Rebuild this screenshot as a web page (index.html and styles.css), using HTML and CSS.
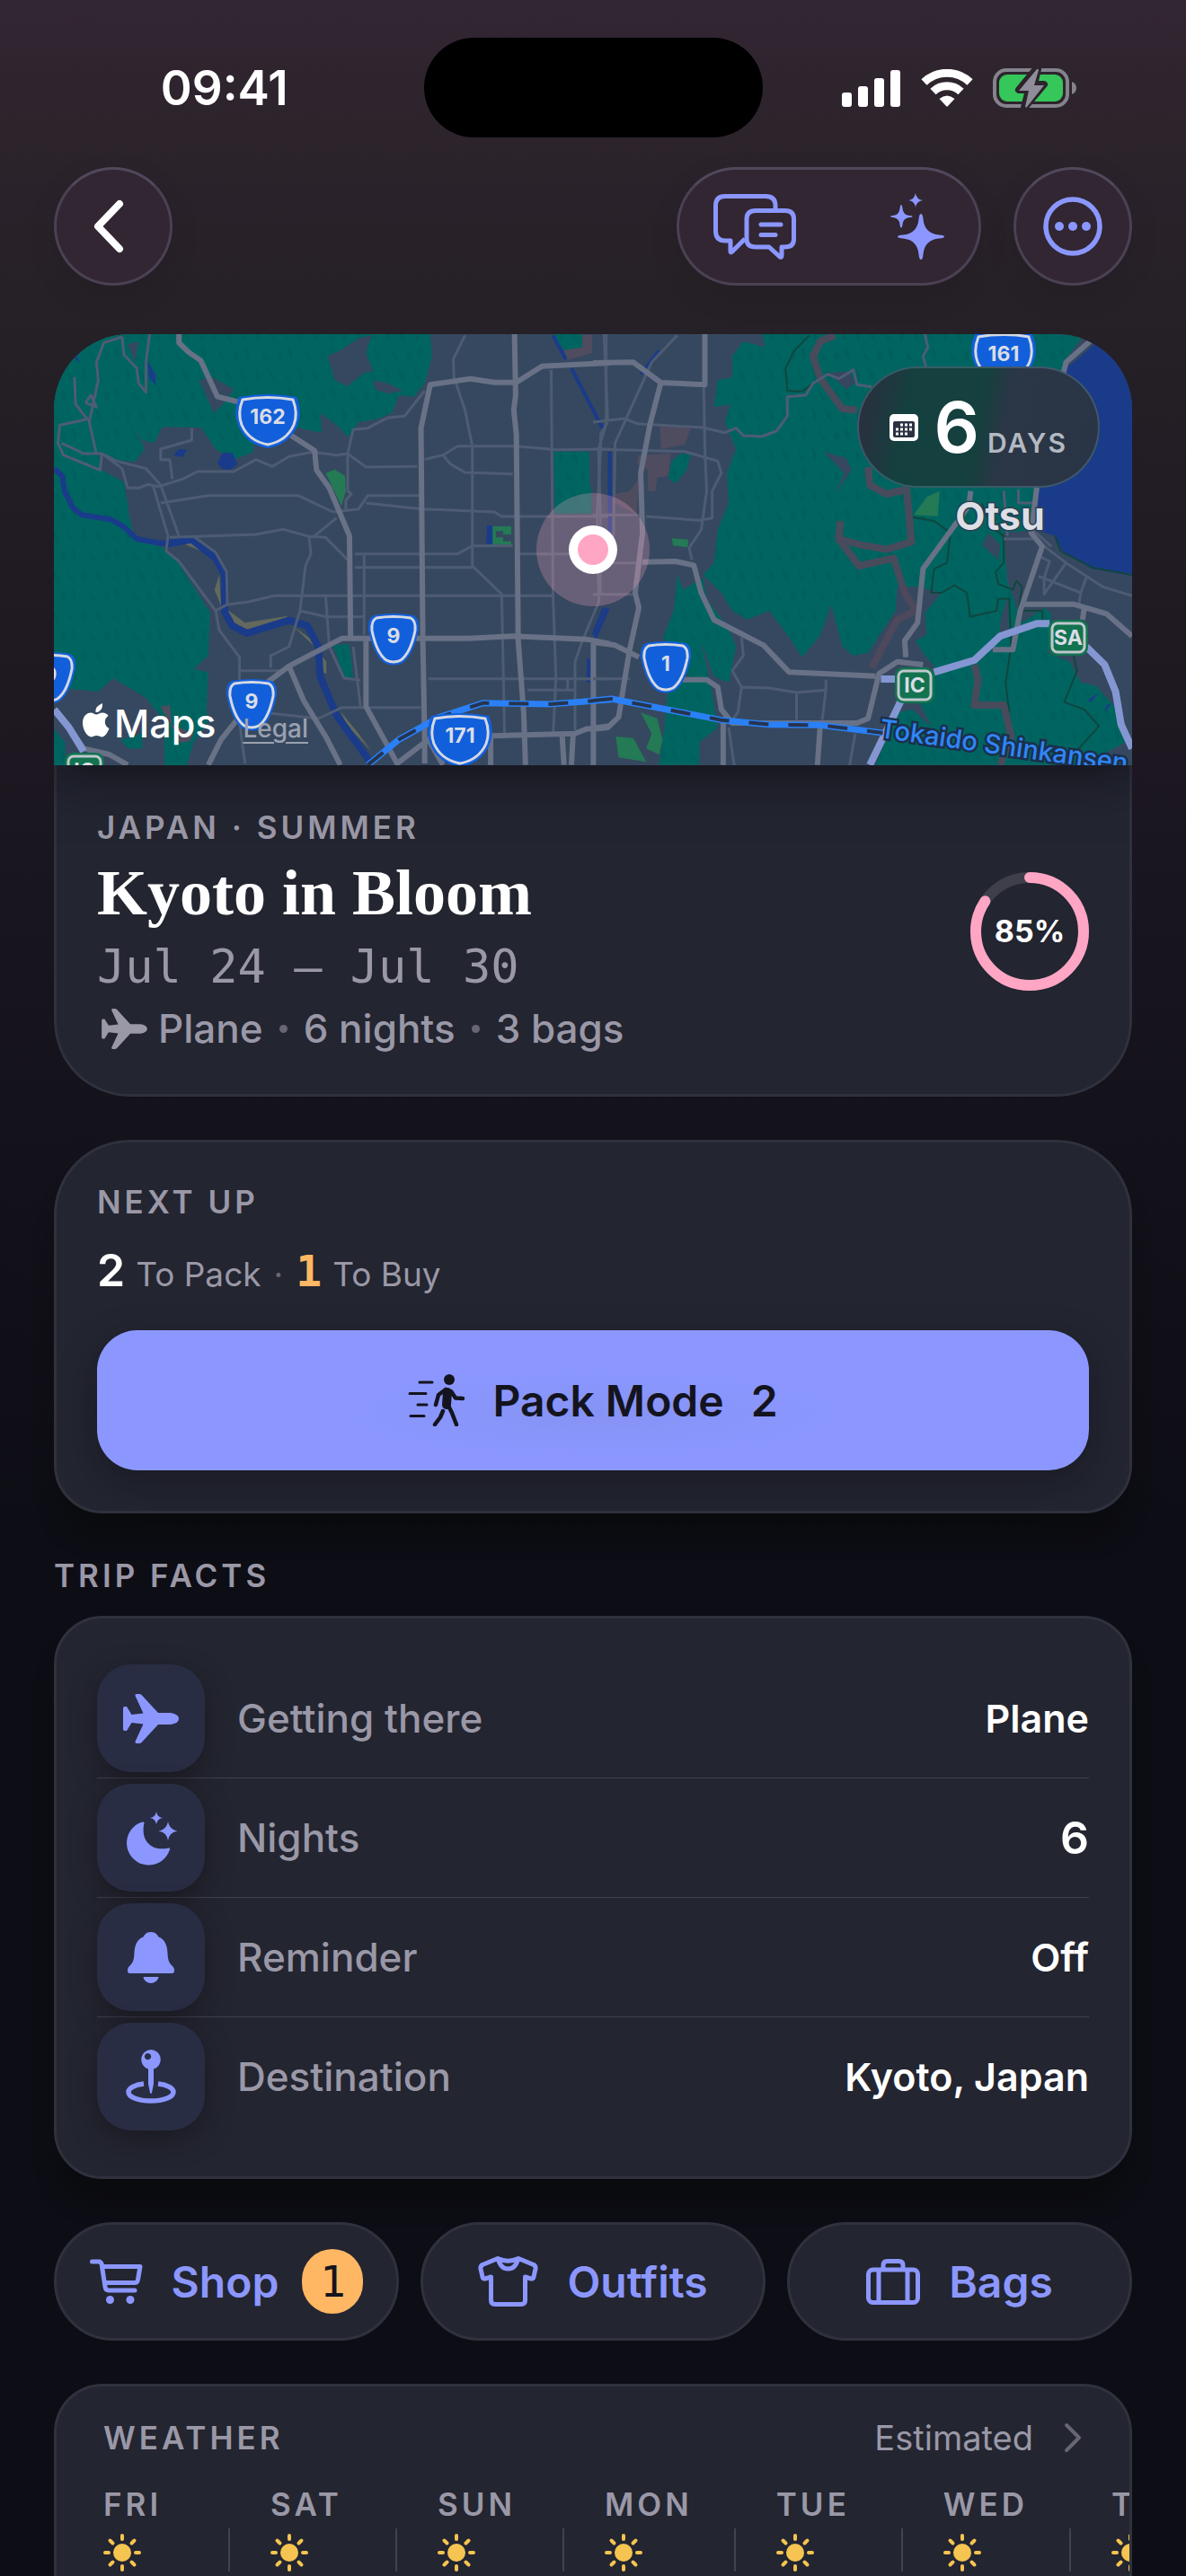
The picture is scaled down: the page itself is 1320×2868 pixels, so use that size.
FILE: index.html
```html
<!DOCTYPE html>
<html lang="en">
<head>
<meta charset="utf-8">
<meta name="viewport" content="width=device-width, initial-scale=1">
<title>Kyoto in Bloom</title>
<link rel="stylesheet" href="styles.css">
</head>
<body>
<svg class="defs" aria-hidden="true">
  <symbol id="plane" viewBox="0 0 62 55"><path d="M0 16Q0 14 2 14H4L9.500 23 22.500 21.500 13.500 2Q13 0 15 0H18Q19.500 0 20.500 1L39 21H53Q62 22.500 62 27.500Q62 32.500 53 34H39L20.500 54Q19.500 55 18 55H15Q13 55 13.500 53L22.500 33.500 9.500 32 4 41H2Q0 41 0 39Z"/></symbol>
  <symbol id="sun" viewBox="0 0 42 42"><circle cx="21" cy="21" r="10"/><path class="rays" d="M21 2V6M21 36V40M2 21H6M36 21H40M7.500 7.500L10.500 10.500M31.500 31.500L34.500 34.500M34.500 7.500L31.500 10.500M10.500 31.500L7.500 34.500"/></symbol>
</svg>
<div class="screen">
  <header class="status">
    <span class="time">09:41</span>
    <span class="island"></span>
    <span class="indicators">
      <svg width="66" height="42" viewBox="0 0 66 42" fill="#fff"><rect x="0" y="26" width="11" height="16" rx="3"/><rect x="18" y="19" width="11" height="23" rx="3"/><rect x="36" y="10" width="11" height="32" rx="3"/><rect x="54" y="1" width="11" height="41" rx="3"/></svg>
      <svg width="58" height="42" viewBox="0 0 58 42"><g fill="none" stroke="#fff" stroke-width="9"><path d="M3.500 14.500A37 37 0 0 1 54.500 14.500"/><path d="M13.500 25A22.500 22.500 0 0 1 44.500 25"/></g><path fill="#fff" d="M20.500 33Q29 26 37.500 33L30 41Q29 42 28 41Z"/></svg>
      <svg width="94" height="46" viewBox="0 0 94 46"><rect x="2" y="3" width="81" height="40" rx="13" fill="none" stroke="#85838e" stroke-width="4"/><rect x="7" y="8" width="71" height="30" rx="9" fill="#35c759"/><path d="M88 16Q93 18 93 23T88 30Z" fill="#85838e"/><path d="M48 2L29 25H40L35 45 57 19H46L50 2Z" fill="#8e8d98" stroke="#2d232c" stroke-width="8" stroke-linejoin="round"/><path d="M49 2L29 26H40L36 44Q37 45 38 44L57 20H46L51 3Q50 1 49 2Z" fill="#8e8d98"/></svg>
    </span>
  </header>

  <nav class="toolbar">
    <button class="glass round" aria-label="Back"><svg width="36" height="60" viewBox="0 0 36 60"><path d="M30 5L6 30 30 55" fill="none" stroke="#fff" stroke-width="8" stroke-linecap="round" stroke-linejoin="round"/></svg></button>
    <div class="tools">
      <div class="glass group">
        <button aria-label="Chat"><svg width="92" height="73" viewBox="0 0 92 73" fill="none" stroke="#8b97ff" stroke-width="5" stroke-linejoin="round" stroke-linecap="round"><path stroke-linecap="butt" d="M69 18V13Q69 2.500 58 2.500H13Q2.500 2.500 2.500 13V41Q2.500 52 13 52H19V63.500Q19 66 21 64L35 50"/><path d="M47 18.500H80Q89.500 18.500 89.500 28V50Q89.500 59 80 59H76V69Q76 71 74 70L62 59H47Q37 59 37 50V28Q37 18.500 47 18.500Z"/><path d="M53 34H75M53 45.500H69"/></svg></button>
        <button aria-label="Suggestions"><svg width="60" height="74" viewBox="0 0 60 74" fill="#8b97ff"><path d="M34 23Q36 23 36.500 29Q38 45 54 46.500Q60 47 60 48.500T54 50.500Q38 52 36.500 68Q36 74 34 74T31.500 68Q30 52 14 50.500Q8 50 8 48.500T14 46.500Q30 45 31.500 29Q32 23 34 23Z"/><path d="M12 13Q13 13 13.500 17Q14 24 21 25Q24.500 25 24.500 26T21 27Q14 28 13.500 35Q13 38.500 12 38.500T10.500 35Q10 28 3 27Q0 27 0 26T3 25Q10 24 10.500 17Q11 13 12 13Z"/><path d="M28 0Q29 7 36 8Q29 9 28 16Q27 9 20 8Q27 7 28 0Z"/></svg></button>
      </div>
      <button class="glass round" aria-label="More"><svg width="66" height="66" viewBox="0 0 66 66" fill="#8b97ff"><circle cx="33" cy="33" r="30" fill="none" stroke="#8b97ff" stroke-width="5.500"/><circle cx="18" cy="33" r="5"/><circle cx="33" cy="33" r="5"/><circle cx="48" cy="33" r="5"/></svg></button>
    </div>
  </nav>

  <main>
    <section class="hero">
      <div class="map">
        <svg class="map-art" viewBox="0 0 1200 480" preserveAspectRatio="xMidYMid slice" role="img" aria-label="Map of Kyoto">
          <defs>
            <pattern id="hills" width="118" height="134" patternUnits="userSpaceOnUse">
              <rect width="118" height="134" fill="#006561"/>
              <path d="M6 4L22 40 14 66 8 30ZM40 10L58 34 66 70 48 48ZM84 2L96 40 112 58 92 52ZM24 70L34 100 52 128 30 118ZM70 84L82 104 78 130 66 108ZM98 74L112 104 106 126 96 98Z" fill="#00605d"/>
            </pattern>
            <g id="wide"><path d="M-32-25Q0-31 32-25Q39-8 33 7Q24 28 0 32Q-24 28-33 7Q-39-8-32-25Z" fill="#125fdc"/><path d="M-28-22Q0-27 28-22Q34-7 29 6Q21 24 0 28Q-21 24-29 6Q-34-7-28-22Z" fill="none" stroke="#d5d9e2" stroke-width="3"/></g>
            <g id="slim"><path d="M-22-25Q0-29 22-25Q29-22 28-9Q22 20 10 28Q0 33-10 28Q-22 20-28-9Q-29-22-22-25Z" fill="#125fdc"/><path d="M-19-22Q0-25 19-22Q25-19 24-8Q19 17 8 25Q0 29-8 25Q-19 17-24-8Q-25-19-19-22Z" fill="none" stroke="#d5d9e2" stroke-width="3"/></g>
            <g id="exit"><rect x="-22" y="-20" width="44" height="40" rx="9" fill="#127350"/><rect x="-18" y="-16" width="36" height="32" rx="6" fill="none" stroke="#c0c8cc" stroke-width="3"/></g>
          </defs>
          <rect width="1200" height="480" fill="#36485f"/>

          <!-- west half -->
          <g class="geo" transform="translate(-20 -12) scale(.40816 .33333)">
            <g class="forest">
              <path d="M40 30H1075L1080 110 1060 200 1030 245 990 240 970 300 930 320 880 330 852 380 820 340 775 300 780 365 720 350 600 330 592 430 540 455 490 420 450 348 345 346 322 400 290 390 270 350 297 420 270 462 200 455 170 430 180 490 240 530 250 600 255 650 270 720 350 750 390 800 430 880 475 965 470 1110 430 1155 470 1165 465 1290 470 1330 430 1400 410 1480H350L350 1330 300 1250 210 1185 170 1230 40 1215Z"/>
              <path d="M1412 428H1510V530L1515 560 1515 635H1415Z"/>
              <path d="M810 1075L855 1070 865 1185 840 1180Z"/><path d="M40 1340L80 1400 80 1480H40Z"/><path d="M230 1390L290 1370 290 1420 250 1420Z"/>
              <path d="M1410 36H1490V80L1440 90Z"/>
            </g>
            <path class="land" d="M795 110L830 90 880 50 915 40 900 100 920 160 895 165 850 210 815 190Z"/>
            <path class="land" d="M445 190L480 180 540 220 510 270 485 300Z"/><path class="land" d="M920 190L960 200 1000 225 960 235 925 220Z"/><path class="land" d="M250 70L280 60 270 130Z"/>
            <path class="grass" d="M790 500L815 488 843 510 845 560 833 610Z"/><path class="grass" d="M1240 678H1296V740H1236Z"/><path class="land" d="M1254 694H1274V706H1296V728H1274V715H1254Z"/>
            <path class="brick" d="M340 1280L365 1275 370 1340 430 1370 420 1395 395 1400Z"/><path class="brick" d="M1440 90L1490 80V38H1517V98L1450 122Z"/>
            <g class="sand">
              <path d="M400 735L440 727 475 768 440 755Z"/><path d="M500 840L505 945 487 890Z"/><path d="M515 950L570 1000 685 978 685 990 570 1025 520 985Z"/><path d="M700 1010L760 1080 745 1050Z"/><path d="M775 1105L792 1130 792 1170 780 1165Z"/><path d="M830 1295L880 1370 915 1430 850 1345Z"/>
            </g>
            <path class="lake" d="M375 440L390 420 412 422 400 448ZM495 465L510 432H535L550 470 530 490 505 485ZM305 125L325 170 328 210 308 180ZM105 115L130 85 112 110 120 135ZM1230 675H1245V738H1228Z"/>
            <g class="river">
              <path d="M50 485L72 510 78 560 100 615 125 640 205 655 240 680 275 720 340 735 420 725" stroke-width="6"/>
              <path d="M350 738L425 722 490 785 515 840 515 965 535 1010 575 1035 690 992 740 1010 770 1080 775 1180 820 1310 915 1470" stroke-width="8"/>
              <path d="M1410 40L1445 120" stroke-width="4"/><path d="M1460 150L1545 350M1565 430V700M1560 950L1525 1050M1507 1120V1200" stroke-width="4"/>
            </g>
            <g class="minor">
              <path d="M235 45L185 65 165 130 170 190 145 330 165 435M235 45L240 105 275 150 280 200 300 230 300 130 310 36M105 180L108 270 140 320 65 340 60 400 75 440 125 465 175 490 180 435 130 435 70 400M135 265L165 280 150 240 135 265"/>
              <path d="M180 435L220 460 300 485 340 540 390 710M180 435L235 485 250 550 280 550 305 538 335 545 400 520 440 495 540 495 600 455 645 478 690 445 755 430 820 440 850 435 865 355 905 350 960 315 1005 310 1060 225"/>
              <path d="M320 545L360 710 355 760 390 795 490 960 500 1025 555 1115 555 1330 570 1470M425 350V390L340 420V455H365L372 520M340 600L470 575H715L810 630"/>
              <path d="M365 715L600 705 675 688 745 712 790 715 850 790M430 712L490 765 520 830 522 940M820 650L760 710 745 715 750 770 735 810 720 960 690 1080 640 1110 640 1150M490 960L520 940 580 930 650 910H1410M720 960L790 980H895"/>
              <path d="M850 435L900 480 1040 478M850 440V560L860 570 845 590V620M810 630L880 620 905 575H1045M900 600L1050 620 1250 630 1270 645H1560M1060 455L1110 440 1150 410H1310L1420 422 1565 420M1110 440L1130 470 1170 498 1300 503"/>
              <path d="M1170 40L1138 120 1140 180 1170 290 1190 410V810L1270 905 1278 1380M1405 155L1410 910 1418 1180 1410 1380M870 770H1150L1190 743H1300M870 815L1190 815M895 770V1040M1320 770H1560M1540 420L1530 640 1535 930 1490 1060 1470 1130V1360M1555 36V340L1540 370V420"/>
              <path d="M790 910L800 1080 840 1185 885 1192M865 1080L885 1280M555 1160H670M620 1300L770 1320 835 1283H1050M1070 1187H1565M1340 1225H1470M1450 1190V1225"/>
            </g>
            <g class="major">
              <path d="M390 36V65L415 95 450 125 495 245 560 265"/><path d="M690 370L760 425 765 490 800 550 855 710 858 1052"/>
              <path d="M1060 1470V1390L1055 1060 1050 350 1075 205 1185 185 1250 197H1310L1380 143 1565 132M1305 36L1308 240 1303 290 1310 370 1315 1060 1330 1300 1335 1475"/>
              <path d="M470 1475L505 1390 630 1200 690 1145 835 1052H1180L1300 1045 1500 1055 1565 1070M690 1145L730 1260 790 1380 830 1475M900 1055V1280L985 1470 1070 1390 1110 1475M1240 1475V1378L1470 1370 1500 1355 1565 1345M1520 1060V1475M1435 1380L1440 1475M1465 1370L1460 1475"/>
              <path d="M50 1290L90 1350 130 1420 200 1440 250 1475"/>
            </g>
            <path class="express" d="M50 1290L90 1350 130 1430"/>
            <path class="rail" d="M905 1475L990 1390 1100 1315 1220 1268 1400 1272 1570 1256"/><path class="ties" d="M905 1475L990 1390 1100 1315 1220 1268 1400 1272 1570 1256"/>
          </g>

          <!-- east half -->
          <g class="geo" transform="translate(600 -12) scale(.40816 .33333)">
            <g class="forest">
              <path d="M380 110L410 60 470 80 460 36H1340L1290 120 1210 560 1205 690 1120 700 1130 860 1170 1000 1230 950 1250 970 1240 1100 1300 1130 1330 1200 1370 1210 1430 1290 1450 1400 1390 1440 1340 1475H770L830 1300 870 1290 920 1340 880 1240 940 1160 900 1100 880 1060 910 1040 905 960 950 900 890 880 830 880 825 960 750 1100 710 1110 680 1080 650 940 620 1040 570 1115 530 1040 480 960 420 990 380 960 350 900 300 840 330 800 340 690 370 600 365 500 390 420 360 330 375 270 330 280 340 190 380 180Z"/>
              <path d="M230 840L245 890 300 850 310 920 370 1020 390 1080 370 1200 330 1180 300 1080 260 980 240 900 290 1040 320 1200 340 1350 290 1400 290 1475H180L195 1350 205 1210 260 1180 240 1120 190 1050 220 960Z"/>
              <path d="M215 460L240 435 267 437 255 490 225 535 205 515Z"/><path d="M1125 550H1153V610H1125Z"/>
            </g>
            <path class="land" d="M630 430L690 450 705 490 660 570 685 500ZM640 165L700 160 715 200 690 220ZM1060 740L1080 700 1110 740 1105 790ZM880 1290L930 1350 905 1330ZM1110 1000L1130 910 1135 1050 1110 1040ZM870 900L950 900 890 990 850 1050 840 960Z"/>
            <path class="grass" d="M215 718L260 722 258 748 218 742ZM875 640L910 580 945 560 940 645ZM130 1300L175 1320 190 1390 180 1440 145 1420 160 1370ZM62 1380L110 1385 145 1465 70 1450Z"/>
            <path class="brick" d="M183 343L267 350 250 405 185 420ZM125 440L212 435 205 510 175 515 170 560H150V490L120 465ZM60 570L100 560 125 520 120 640 60 600Z"/>
            <path class="lake" d="M1370 66L1330 110 1290 150 1215 560 1210 690 1260 710 1280 760 1360 820 1480 845V36ZM1350 1260L1378 1232 1360 1265ZM1395 1300L1413 1270 1400 1275Z"/>
            <g class="river"><path d="M45 430V690M30 950L0 1040M0 285L25 350M180 90L130 170" stroke-width="3"/></g>
            <path class="border" d="M590 40L550 90 525 150 530 225 570 228 600 200M860 645L930 660 975 700 965 800 930 820 922 900 950 900 985 875 1020 900 1028 980 1100 960 1105 920H1135L1140 1080 1125 1200 1135 1300M1060 600L1085 680 1120 710V800L1098 830 1105 870 1145 890 1155 860 1170 880 1160 960 1225 960V1000M1310 1110L1320 1160 1285 1265 1340 1290 1380 1345 1310 1440M1260 710L1275 760 1360 815 1470 840"/>
            <path class="trail" d="M660 40L620 60 600 110 620 185 680 285 720 290M750 480L755 540 800 570 855 555 862 640 868 730 800 755 730 740 670 720 675 660M670 720L725 810 820 785 850 900 880 960 830 990 790 1080 760 1150M1040 1140L1050 1190 1040 1275H1120L1140 1380 1110 1475"/>
            <g class="minor">
              <path d="M30 36L40 320 15 420 20 640V910M230 40L160 130 90 320 60 400 55 800M0 330L85 318 120 335 300 348 360 365 390 350 410 375 460 378 500 360 530 310V245L580 240 600 200 640 170 670 185 710 155 720 205 760 212M905 36L913 80 900 110 908 145M302 210L305 420 310 560 295 690 262 750 270 790"/>
              <path d="M0 420L250 428 340 460 350 500 325 560V650L290 658 145 645M0 640H130M0 800H140M0 905H110M405 1050L410 1110 380 1160 405 1215 480 1218 555 1233 635 1225V1190M555 1233V1325M635 1225L625 1325M405 1215L395 1300 370 1340M0 1187H100M700 1475L715 1370M370 1350L385 1475"/>
              <path d="M1215 730L1290 800 1390 880 1470 910M1290 800L1230 905V850L1245 795 1220 780M1215 845L1330 900 1345 850M1330 900L1325 940M1120 720H1200M1120 560L1130 710M1160 555V600H1200M1200 690L1250 745"/>
            </g>
            <g class="major">
              <path d="M305 36V205L185 198 110 130 0 132M185 198L155 340 130 500 135 700 115 900 125 950 100 1090 85 1200 70 1315 40 1350 0 1355M135 797L225 795 275 808 295 900 330 990 465 1075 535 1165 770 1178M0 1065L60 1075 125 1115M240 1190H310L340 1215 350 1290 380 1335 720 1335 750 1320 780 1170 830 1130 900 1140M355 1335V1475M620 1335L612 1475"/>
              <path d="M1030 560L1025 610 900 820 885 1000 850 1060 853 1115M1355 60L1290 130 1215 500 1195 700 1225 745 1165 960 1145 1090H1090M1175 938H1310L1400 970 1470 1045M1340 945L1335 990"/>
            </g>
            <path class="express" d="M755 1475L840 1260M785 1188H830M930 1165L1040 1125 1110 1045 1210 1003 1245 1003M1345 1080L1395 1140 1425 1230 1440 1340 1470 1420"/>
            <path class="rail" d="M0 1260L50 1254 350 1325 480 1340 620 1342 790 1368"/><path class="ties" d="M0 1260L50 1254 350 1325 480 1340 620 1342 790 1368"/>
          </g>

          <g class="shields">
            <use href="#wide" x="238" y="95"/><text x="238" y="100">162</text>
            <use href="#slim" x="378" y="338"/><text x="378" y="344">9</text>
            <use href="#slim" x="220" y="411"/><text x="220" y="417">9</text>
            <use href="#slim" x="-4" y="381"/><text x="-4" y="387">9</text>
            <use href="#wide" x="452" y="450"/><text x="452" y="455">171</text>
            <use href="#wide" x="1057" y="25"/><text x="1057" y="30">161</text>
            <use href="#slim" x="681" y="369"/><text x="681" y="375">1</text>
            <use href="#exit" x="958" y="391"/><text x="958" y="399">IC</text>
            <use href="#exit" x="1129" y="338"/><text x="1129" y="346">SA</text>
            <use href="#exit" x="34" y="486"/><text x="34" y="494">IC</text>
          </g>
          <text class="rail-name" transform="translate(918 449) rotate(8)">Tokaido Shinkansen</text>
          <text class="town" x="1053" y="218" text-anchor="middle">Otsu</text>
          <circle cx="600" cy="240" r="63" fill="#ffa8c5" fill-opacity=".25"/><circle cx="600" cy="240" r="27" fill="#fff"/><circle cx="600" cy="240" r="17" fill="#ffa6c4"/>
        </svg>
        <div class="countdown">
          <svg width="32" height="30" viewBox="0 0 32 30"><rect width="32" height="30" rx="5" fill="#fff"/><rect x="4" y="8" width="24" height="18" rx="2" fill="#2b3242"/><path d="M12 12H25M7 17H25M7 22H20" stroke="#fff" stroke-width="3" stroke-dasharray="3 2"/></svg>
          <strong>6</strong><span>DAYS</span>
        </div>
        <div class="credit">
          <span class="brand"><svg width="30" height="38" viewBox="0 0 30 38" fill="#fff"><path d="M22 0Q22.500 4.500 20 7.500T14.500 10Q14 6 16.500 3.500T22 0Z"/><path d="M15 12.500C17 12.500 19 10.500 22 10.500C25 10.500 27.500 12 28.500 14C23 17.500 24 25.500 29.500 28C28 32 25 37.500 21.500 37.500C19.500 37.500 18.500 36 15.500 36C12.500 36 11.500 37.500 9.500 37.500C5 37.500 0 29 0 22C0 14.500 4.500 10.500 9 10.500C11.500 10.500 13.500 12.500 15 12.500Z"/></svg>Maps</span>
          <a href="#legal">Legal</a>
        </div>
      </div>
      <div class="hero-body">
        <div class="hero-text">
          <p class="eyebrow">JAPAN · SUMMER</p>
          <h1>Kyoto in Bloom</h1>
          <p class="dates">Jul 24 — Jul 30</p>
          <p class="meta"><svg width="51" height="45"><use href="#plane"/></svg><span>Plane</span><i></i><span>6 nights</span><i></i><span>3 bags</span></p>
        </div>
        <div class="ring">
          <svg viewBox="0 0 132 132" fill="none" stroke-width="12"><circle cx="66" cy="66" r="60" stroke="#3e3f4a"/><circle cx="66" cy="66" r="60" stroke="#ffa6c4" stroke-linecap="round" pathLength="100" stroke-dasharray="84.500 100" transform="rotate(-90 66 66)"/></svg>
          <span>85%</span>
        </div>
      </div>
    </section>

    <section class="card next">
      <h2 class="eyebrow">NEXT UP</h2>
      <p class="counts"><span class="count"><b>2</b>To Pack</span><em>·</em><span class="count buy"><b>1</b>To Buy</span></p>
      <button class="pack">
        <svg width="64" height="58" viewBox="0 0 64 58" fill="none" stroke="#14141f" stroke-width="3" stroke-linecap="round" stroke-linejoin="round"><circle cx="46" cy="6" r="6" fill="#14141f" stroke="none"/><path d="M13 9H27M2 21.500H20M11 34H21M3 46.500H18"/><path stroke-width="10" d="M44 20L43 34"/><path stroke-width="4.500" d="M42 17L34 23 31 34M48 19L53 26.500 61 27M45 35L49 43 54 56M39 41L36 48 30 56"/></svg>
        <span>Pack Mode</span><span>2</span>
      </button>
    </section>

    <h2 class="eyebrow heading">TRIP FACTS</h2>
    <dl class="card facts">
      <div><dt><span class="tile"><svg width="62" height="55"><use href="#plane"/></svg></span>Getting there</dt><dd>Plane</dd></div>
      <div><dt><span class="tile"><svg width="60" height="62" viewBox="0 0 60 62"><path d="M20.500 13.500A24.500 24.500 0 1 0 51 44Q51.500 42 49.500 42.500C30 47 18 33 22.500 15Q23 13 20.500 13.500Z"/><path d="M36 2Q37 8 43 9Q37 10 36 16Q35 10 29 9Q35 8 36 2ZM49 13Q50.500 22 59.500 23.500Q50.500 25 49 34Q47.500 25 38.500 23.500Q47.500 22 49 13Z"/></svg></span>Nights</dt><dd class="number">6</dd></div>
      <div><dt><span class="tile"><svg width="52" height="57" viewBox="0 0 52 57"><path d="M26 0C31 0 33 3 34.500 5.500C41 8 44 14 44.500 23C44.800 33 47 35 50 38C52 40 52 42 52 43C52 45.500 50.500 46 49 46H3C1.500 46 0 45.500 0 43C0 42 0 40 2 38C5 35 7.200 33 7.500 23C8 14 11 8 17.500 5.500C19 3 21 0 26 0ZM17.500 50H34.500C34 54 30 57 26 57S18 54 17.500 50Z"/></svg></span>Reminder</dt><dd>Off</dd></div>
      <div><dt><span class="tile"><svg width="56" height="60" viewBox="0 0 56 60"><path fill-rule="evenodd" d="M28 0A11 11 0 0 1 31 21.500V38L29 48Q28 50 27 48L25 38V21.500A11 11 0 0 1 28 0ZM24.500 4A3.600 3.600 0 1 0 24.510 4Z"/><path d="M36 38C46 39 53 43 53 47C53 53 42 57 28 57S3 53 3 47C3 43 10 39 20 38" fill="none" stroke="#8b97ff" stroke-width="5.500"/></svg></span>Destination</dt><dd>Kyoto, Japan</dd></div>
    </dl>

    <div class="shortcuts">
      <button class="card"><svg width="59" height="50" viewBox="0 0 59 50" fill="none" stroke="#8b97ff" stroke-width="5" stroke-linecap="round" stroke-linejoin="round"><path d="M2.500 3H11L13 5 17 31Q17.500 35 21 35H50M14 8.500H56L53.500 23Q53 26.500 50 26.500H17"/><g fill="#8b97ff" stroke="none"><circle cx="22.500" cy="45.500" r="4.500"/><circle cx="45" cy="45.500" r="4.500"/></g></svg><span>Shop</span><span class="badge">1</span></button>
      <button class="card"><svg width="67" height="56" viewBox="0 0 67 56" fill="none" stroke="#8b97ff" stroke-width="5" stroke-linejoin="round"><path d="M22 2.500L5 9.500Q2.500 11 3 14L5 23Q5.500 25.500 8 25L14.500 23V49Q14.500 53.500 19 53.500H48Q52.500 53.500 52.500 49V23L59 25Q61.500 25.500 62 23L64 14Q64.500 11 62 9.500L45 2.500Q33.500 8 22 2.500ZM22.500 3Q25 14 33.500 14T44.500 3"/></svg><span>Outfits</span></button>
      <button class="card"><svg width="60" height="51" viewBox="0 0 60 51" fill="none" stroke="#8b97ff" stroke-width="5"><rect x="2.500" y="12" width="55" height="36.500" rx="5"/><path d="M14 12V48M46 12V48M19 12V7Q19 2.500 23.500 2.500H36.500Q41 2.500 41 7V12"/></svg><span>Bags</span></button>
    </div>

    <section class="card weather">
      <div class="weather-head"><h2 class="eyebrow">WEATHER</h2><a href="#weather">Estimated<svg width="20" height="34" viewBox="0 0 20 34"><path d="M3 3L17 17 3 31" fill="none" stroke="#686675" stroke-width="4" stroke-linecap="round" stroke-linejoin="round"/></svg></a></div>
      <ol class="days">
        <li><span class="eyebrow">FRI</span><svg><use href="#sun"/></svg></li>
        <li><span class="eyebrow">SAT</span><svg><use href="#sun"/></svg></li>
        <li><span class="eyebrow">SUN</span><svg><use href="#sun"/></svg></li>
        <li><span class="eyebrow">MON</span><svg><use href="#sun"/></svg></li>
        <li><span class="eyebrow">TUE</span><svg><use href="#sun"/></svg></li>
        <li><span class="eyebrow">WED</span><svg><use href="#sun"/></svg></li>
        <li><span class="eyebrow">THU</span><svg><use href="#sun"/></svg></li>
      </ol>
    </section>
  </main>
</div>
</body>
</html>
```
FILE: styles.css
```css
:root {
  --accent: #8b97ff;
  --muted: #9a98a7;
  --surface: #232530;
  --line: #2f313d;
  --pink: #ffa6c4;
  --orange: #ffb763;
}
* { box-sizing: border-box; }
body {
  margin: 0;
  background: #0d0d15;
  color: #fff;
  font-family: Inter, "Noto Sans", sans-serif;
}
h1, h2, p, dl, dd, ol { margin: 0; padding: 0; }
button { margin: 0; padding: 0; border: 0; background: none; color: inherit; font: inherit; cursor: pointer; }
a { color: inherit; }
svg { display: block; flex: none; }
.defs { position: absolute; width: 0; height: 0; }

.screen {
  display: flex;
  flex-direction: column;
  min-height: 100vh;
  padding: 0 60px;
  background: linear-gradient(#322633 0, #2e242d 100px, #262027 340px, #1c1720 850px, #14121b 1240px, #0d0d15 1720px);
}

/* status bar */
.status {
  display: grid;
  grid-template-columns: 1fr 377px 1fr;
  align-items: center;
  margin: 0 -60px;
  padding: 42px 0 33px;
}
.time { padding-left: 28px; text-align: center; font-size: 53px; font-weight: 600; line-height: 60px; }
.island { height: 111px; border-radius: 56px; background: #000; }
.indicators { display: flex; align-items: center; justify-content: center; gap: 22px; padding-right: 32px; }

/* toolbar */
.toolbar { display: flex; justify-content: space-between; }
.tools { display: flex; gap: 36px; }
.glass {
  height: 132px;
  border: 3px solid #4a4153;
  border-top-color: #51485b;
  border-radius: 66px;
  background: #312632;
  box-shadow: 0 12px 36px rgba(0, 0, 0, .08);
}
.round { display: flex; align-items: center; justify-content: center; width: 132px; }
.round[aria-label="Back"] svg { margin-right: 10px; }
.group { display: flex; align-items: center; gap: 105px; padding: 0 38px; }

main { display: flex; flex: 1; flex-direction: column; margin-top: 54px; }
.card { border: 3px solid var(--line); border-radius: 54px; background: var(--surface); }
.eyebrow { color: var(--muted); font-size: 35px; font-weight: 600; line-height: 42px; letter-spacing: 4px; }

/* hero */
.hero { overflow: hidden; border-radius: 84px; }
.map { position: relative; height: 480px; box-shadow: 0 12px 50px rgba(10, 8, 16, .6); }
.map-art { width: 100%; height: 100%; }
.geo path { vector-effect: non-scaling-stroke; }
.forest { fill: url(#hills); }
.land { fill: #36485f; }
.grass { fill: #237a55; }
.brick { fill: #504c60; }
.sand { fill: #63695c; }
.lake { fill: #1a3b8a; }
.river, .minor, .major, .express, .rail, .ties, .trail, .border { fill: none; stroke-linejoin: round; }
.river { stroke: #1a3b8a; }
.minor { stroke: #4e5c73; stroke-width: 3px; }
.major { stroke: #687186; stroke-width: 6px; }
.express { stroke: #8597d2; stroke-width: 8px; }
.rail { stroke: #2a80f6; stroke-width: 7px; }
.ties { stroke: #26344f; stroke-width: 4px; stroke-dasharray: 22px 22px; }
.trail { stroke: #50495c; stroke-width: 8px; opacity: .9; }
.border { stroke: #10463f; stroke-width: 2px; }
.shields text { fill: #d9dde6; font-size: 23px; font-weight: 700; text-anchor: middle; }
.rail-name { fill: #2f86f6; stroke: #1b2f4b; stroke-width: 5px; paint-order: stroke; font-size: 29px; font-weight: 500; }
.town { fill: #dcdfe5; stroke: #2c3f51; stroke-width: 3px; paint-order: stroke; font-size: 43px; font-weight: 700; }
.countdown {
  position: absolute;
  top: 36px;
  right: 36px;
  display: flex;
  align-items: baseline;
  height: 135px;
  padding: 0 34px;
  border: 2px solid rgba(90, 130, 150, .45);
  border-radius: 68px;
  background: linear-gradient(100deg, #29303f 4%, #14403f 22%, #15403e 50%, #2b3646 60%, #293546);
  line-height: 131px;
}
.countdown svg { align-self: center; margin-right: 18px; }
.countdown strong { font-size: 79px; font-weight: 600; }
.countdown span { margin-left: 9px; color: #b3b9c1; font-size: 30px; font-weight: 600; letter-spacing: 2px; }
.credit { position: absolute; left: 32px; bottom: 20px; display: flex; align-items: baseline; gap: 30px; }
.brand { display: flex; align-items: baseline; gap: 5px; font-size: 43px; font-weight: 500; line-height: 54px; }
.credit a { color: #9ba1b0; font-size: 28px; font-weight: 500; text-underline-offset: 5px; }

.hero-body {
  display: flex;
  align-items: center;
  justify-content: space-between;
  padding: 48px 45px 44px;
  border: 3px solid var(--line);
  border-top: 0;
  border-radius: 0 0 84px 84px;
  background: var(--surface);
}
.hero-text { display: flex; flex-direction: column; gap: 10px; }
h1 { font-family: "Liberation Serif", serif; font-size: 72px; font-weight: 700; line-height: 84px; }
.dates { color: var(--muted); font-family: "DejaVu Sans Mono", monospace; font-size: 52px; line-height: 60px; }
.meta { display: flex; align-items: center; gap: 18px; color: var(--muted); font-size: 44px; font-weight: 500; line-height: 58px; }
.meta svg { margin: 0 -6px 0 5px; fill: var(--muted); }
.meta i { width: 9px; height: 9px; border-radius: 50%; background: #686675; }
.ring { display: grid; place-items: center; width: 132px; height: 132px; }
.ring > * { grid-area: 1 / 1; }
.ring svg { width: 132px; height: 132px; }
.ring span { font-size: 34px; font-weight: 700; line-height: 42px; }

/* next up */
.next { margin-top: 48px; padding: 45px; border-radius: 84px 84px 54px 54px; box-shadow: 0 30px 24px -6px rgba(10, 11, 13, .8); }
.counts { display: flex; align-items: baseline; gap: 14px; height: 62px; margin: 24px 0 36px; color: var(--muted); font-size: 37px; line-height: 62px; }
.count { display: flex; align-items: baseline; gap: 12px; }
.counts b { color: #fff; font-size: 50px; font-weight: 600; }
.counts .buy b { color: var(--orange); font-family: "DejaVu Sans Mono", monospace; font-size: 48px; font-weight: 700; }
.counts em { color: #686675; font-style: normal; }
.pack {
  display: flex;
  align-items: center;
  justify-content: center;
  gap: 30px;
  width: 100%;
  height: 156px;
  border-radius: 45px;
  background: radial-gradient(ellipse at 50% 60%, #8693f4 0, #8b97ff 36%);
  box-shadow: 0 14px 40px rgba(10, 8, 16, .35);
  color: #14141f;
  font-size: 48px;
  font-weight: 600;
}

/* trip facts */
.heading { margin: 48px 0 24px; }
.facts { padding: 45px; font-size: 43px; line-height: 52px; box-shadow: 0 30px 24px -6px rgba(10, 11, 13, .8); }
.facts > div { display: flex; align-items: center; justify-content: space-between; padding: 6px 0; }
.facts > div + div { border-top: 1px solid #40424d; }
.facts dt { display: flex; align-items: center; gap: 36px; color: var(--muted); font-size: 44px; font-weight: 500; }
.facts dd { font-weight: 600; }
.facts .number { font-size: 50px; }
.tile {
  display: grid;
  place-items: center;
  width: 120px;
  height: 120px;
  border-radius: 38px;
  background: #282d43;
  box-shadow: 0 10px 28px rgba(20, 16, 22, .5);
  fill: var(--accent);
}

/* shortcuts */
.shortcuts { display: grid; grid-template-columns: repeat(3, 1fr); gap: 24px; margin: 48px 0; }
.shortcuts button {
  display: flex;
  align-items: center;
  justify-content: center;
  gap: 32px;
  height: 132px;
  border-radius: 66px;
  color: var(--accent);
  font-size: 48px;
  font-weight: 600;
}
.shortcuts .badge {
  width: 68px;
  height: 72px;
  margin-left: -6px;
  border-radius: 36px;
  background: var(--orange);
  color: #14141f;
  font-family: "DejaVu Sans Mono", monospace;
  font-weight: 400;
  line-height: 72px;
  text-align: center;
}

/* weather */
.weather { flex: 1; overflow: hidden; padding: 36px 0 0 52px; border-bottom: 0; border-radius: 54px 54px 0 0; }
.weather-head { display: flex; justify-content: space-between; padding-right: 53px; }
.weather-head a { display: flex; align-items: center; gap: 34px; color: var(--muted); font-size: 38px; line-height: 42px; text-decoration: none; }
.days { display: flex; margin-top: 32px; list-style: none; }
.days li { flex: none; min-width: 139px; padding-right: 46px; }
.days li + li { min-width: 186px; padding-left: 47px; background: linear-gradient(#41434e, #41434e) 0 48px / 2px 100% no-repeat; }
.days span { display: block; }
.days svg { width: 42px; height: 42px; margin-top: 12px; fill: #f5c451; }
.rays { stroke: #f5c451; stroke-width: 4px; stroke-linecap: round; }
```
